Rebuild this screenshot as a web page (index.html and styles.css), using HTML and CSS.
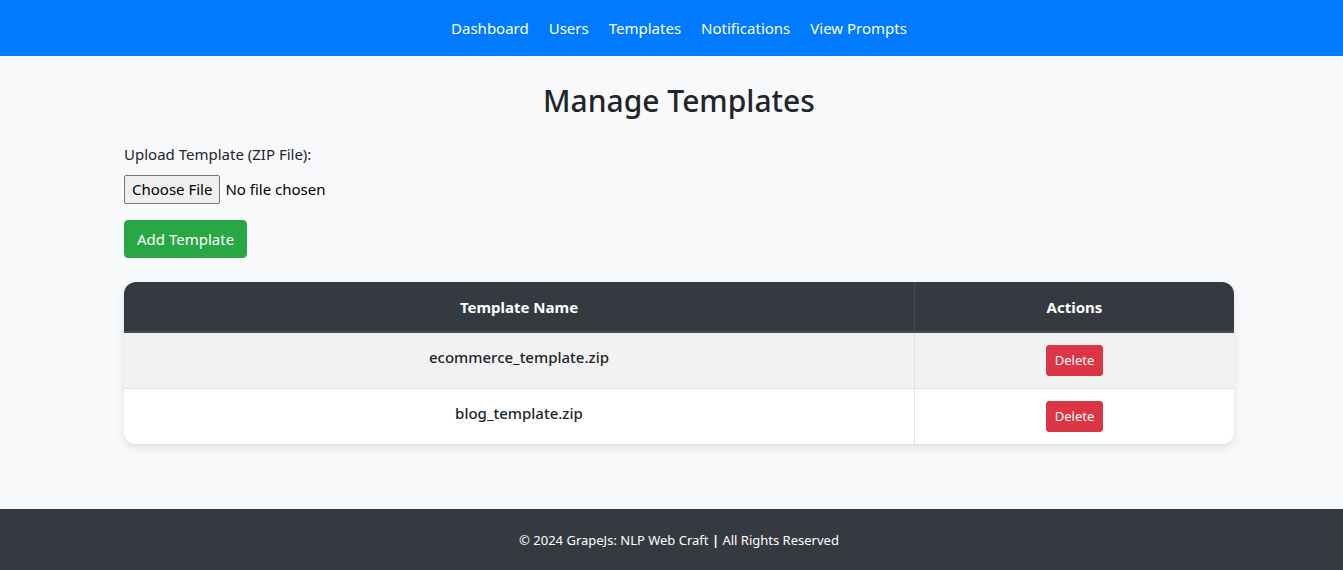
FILE: index.html
```html
<!DOCTYPE html>
<html lang="en">
<head>
<meta charset="utf-8">
<title>Manage Templates</title>
<link rel="stylesheet" href="styles.css">
</head>
<body>
<nav class="navbar">
  <ul class="nav-list">
    <li><a class="nav-link" href="#">Dashboard</a></li>
    <li><a class="nav-link" href="#">Users</a></li>
    <li><a class="nav-link" href="#">Templates</a></li>
    <li><a class="nav-link" href="#">Notifications</a></li>
    <li><a class="nav-link" href="#">View Prompts</a></li>
  </ul>
</nav>
<main class="page">
  <div class="container">
    <h2 class="title">Manage Templates</h2>
    <form class="upload-form">
      <div class="form-group">
        <label class="form-label">Upload Template (ZIP File):</label>
        <div class="file-input">
          <span class="file-button">Choose File</span>
          <span class="file-status">No file chosen</span>
        </div>
      </div>
      <button type="button" class="btn btn-success">Add Template</button>
    </form>
    <div class="table-card">
      <table class="table">
        <thead>
          <tr>
            <th class="col-name">Template Name</th>
            <th>Actions</th>
          </tr>
        </thead>
        <tbody>
          <tr class="row-odd">
            <td class="name-cell">ecommerce_template.zip</td>
            <td><button type="button" class="btn btn-danger">Delete</button></td>
          </tr>
          <tr>
            <td class="name-cell">blog_template.zip</td>
            <td><button type="button" class="btn btn-danger">Delete</button></td>
          </tr>
        </tbody>
      </table>
    </div>
  </div>
</main>
<footer class="footer">
  <p class="footer-text">&copy; 2024 GrapeJs: NLP Web Craft <strong>|</strong> All Rights Reserved</p>
</footer>
</body>
</html>
```

FILE: styles.css
```css
* { box-sizing: border-box; }

body {
  margin: 0;
  background: #f8f9fa;
  color: #212529;
  font-family: "Noto Sans", "Open Sans", sans-serif;
  font-size: 15px;
  line-height: 24px;
}

.navbar {
  background: #007bff;
  height: 56px;
  padding: 8px 0 8px 15px;
}

.nav-list {
  list-style: none;
  margin: 0;
  padding: 0;
  display: flex;
  justify-content: center;
}

.nav-link {
  display: block;
  padding: 8px 10px;
  color: #fff;
  text-decoration: none;
  line-height: 24px;
}

.page {
  padding: 26px 0 65px 15px;
}

.container {
  width: 1110px;
  margin: 0 auto;
}

.title {
  margin: 0 0 22px;
  font-size: 30px;
  line-height: 38px;
  font-weight: 500;
  text-align: center;
}

.form-group {
  margin-bottom: 16px;
}

.form-label {
  display: block;
  margin-bottom: 8px;
}

.file-input {
  display: flex;
  align-items: center;
  gap: 5px;
  height: 30px;
}

.file-button {
  display: inline-block;
  height: 29px;
  line-height: 27px;
  padding: 0 7px;
  background: #efefef;
  border: 1px solid #767676;
  border-radius: 2px;
  color: #000;
}

.file-status {
  color: #000;
}

.btn {
  display: inline-block;
  border: 1px solid transparent;
  border-radius: 4px;
  font-family: inherit;
  color: #fff;
  cursor: pointer;
}

.btn-success {
  background: #28a745;
  border-color: #28a745;
  padding: 6px 12px;
  font-size: 15px;
  line-height: 24px;
}

.btn-danger {
  background: #dc3545;
  border-color: #dc3545;
  padding: 4px 8px;
  font-size: 13px;
  line-height: 21px;
  border-radius: 3px;
}

.table-card {
  margin-top: 24px;
  border-radius: 12px;
  overflow: hidden;
  box-shadow: 0 4px 10px rgba(0, 0, 0, 0.1);
  background: #fff;
}

.table {
  width: 100%;
  border-collapse: separate;
  border-spacing: 0;
}

.table th,
.table td {
  padding: 12px;
  text-align: center;
  vertical-align: top;
}

.table th {
  padding-top: 13px;
  background: #343a40;
  color: #fff;
  font-weight: 700;
  border-bottom: 2px solid #454d55;
}

.table th + th {
  border-left: 1px solid #454d55;
}

.col-name {
  width: 790px;
}

.table td {
  border-top: 1px solid #dee2e6;
}

.table td + td {
  border-left: 1px solid #dee2e6;
}

.table tbody tr:first-child td {
  border-top: none;
}

.name-cell {
  font-weight: 500;
}

.row-odd {
  background: #f2f2f2;
}

.footer {
  background: #343a40;
  color: #fff;
  padding: 19px 0 20px 15px;
  text-align: center;
}

.footer-text {
  margin: 0;
  font-size: 13px;
  line-height: 24px;
}
```
